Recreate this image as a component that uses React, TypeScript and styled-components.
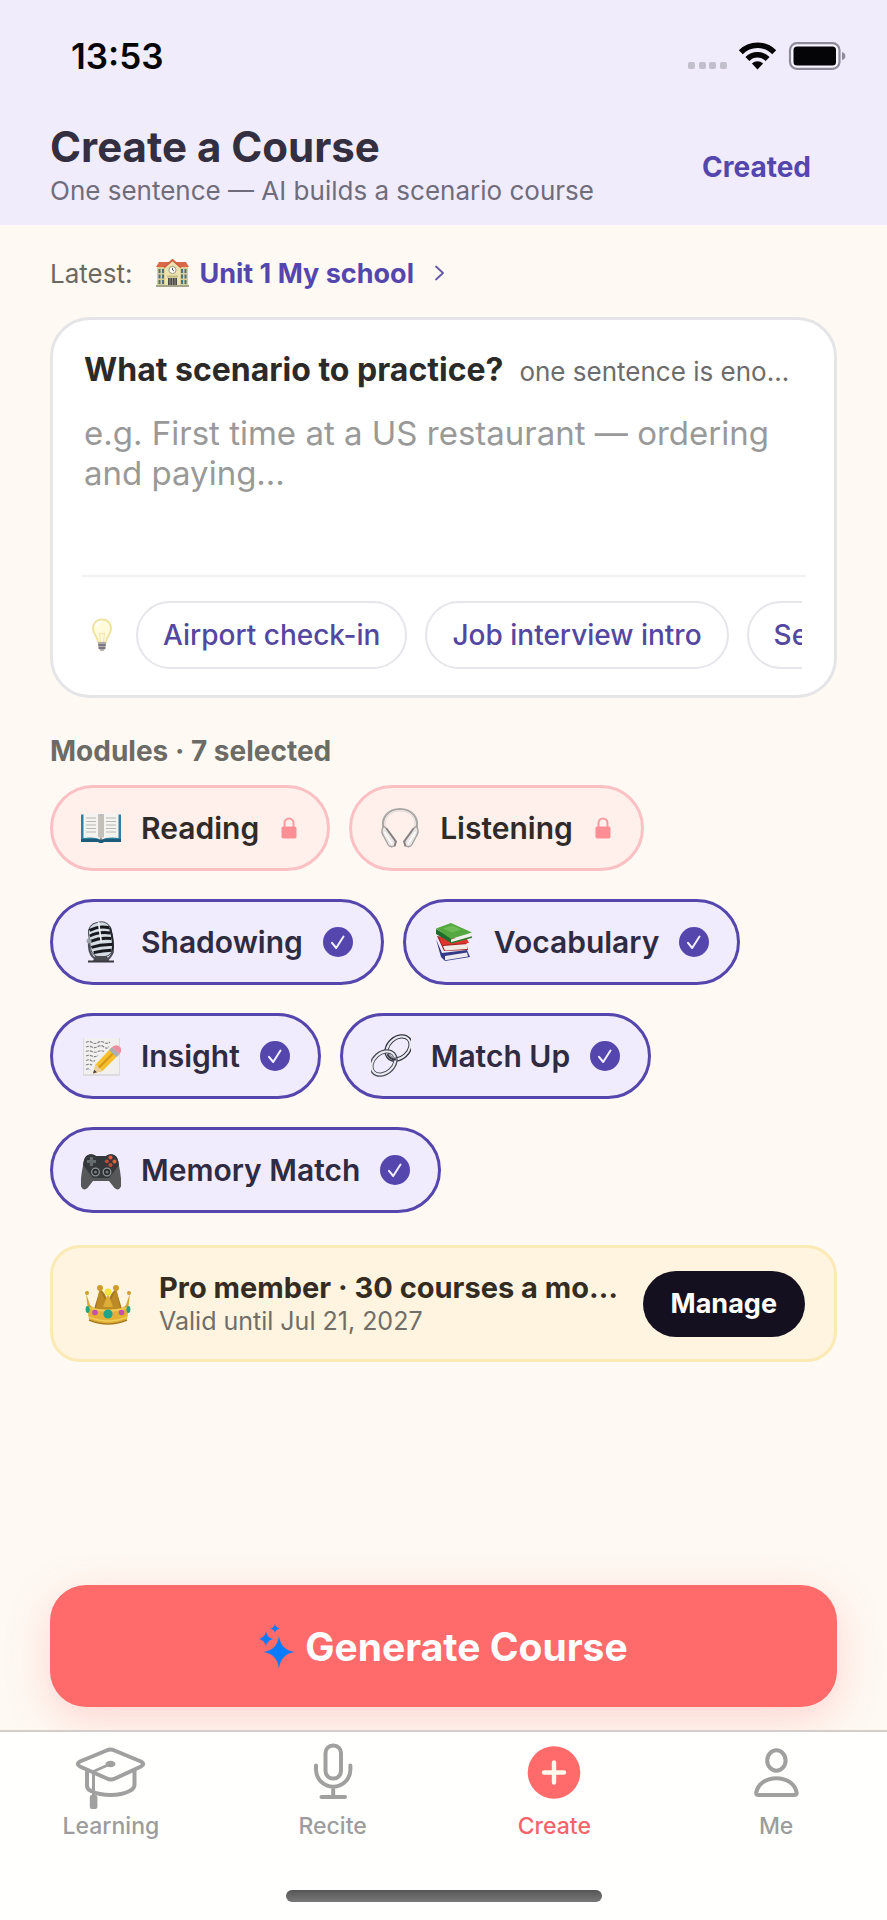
import React, { useState } from "react";
import styled, { createGlobalStyle, css } from "styled-components";

const GlobalStyle = createGlobalStyle`
  * { box-sizing: border-box; }
  body {
    margin: 0;
    background: #fef9f3;
    color: #2b2a29;
    font-family: Inter, "Liberation Sans", sans-serif;
  }
  button, input, textarea { font: inherit; color: inherit; }
  button { border: 0; background: none; padding: 0; cursor: pointer; }
  svg { display: block; flex: none; }
`;

const purple = "#5546ae";

const Page = styled.div`
  min-height: 100vh;
  display: flex;
  flex-direction: column;
`;

/* ---------- header ---------- */

const Top = styled.header`
  background: #f0ecfb;
`;

const StatusBar = styled.div`
  height: 112px;
  padding: 0 40px 0 71px;
  display: flex;
  align-items: center;
  justify-content: space-between;
  color: #050507;
  font-size: 35px;
  font-weight: 600;
`;

const TitleRow = styled.div`
  padding: 0 50px;
  display: flex;
  align-items: center;
  justify-content: space-between;
`;

const TitleBlock = styled.div`
  padding: 8px 0 17px;
`;

const Title = styled.h1`
  margin: 0;
  font-size: 42px;
  line-height: 54px;
  font-weight: 700;
  color: #332f40;
`;

const Subtitle = styled.p`
  margin: 0;
  font-size: 26px;
  line-height: 34px;
  color: #6f6c7c;
`;

const CreatedButton = styled.button`
  padding: 12px 26px 16px;
  font-size: 28px;
  line-height: 34px;
  font-weight: 700;
  color: ${purple};
`;

/* ---------- content ---------- */

const Main = styled.main`
  flex: 1;
  padding: 30px 50px 40px;
`;

const LatestRow = styled.div`
  display: flex;
  align-items: center;
  gap: 24px;
  height: 36px;
  font-size: 26px;
  color: #6b6862;
`;

const LatestLink = styled.a`
  display: flex;
  align-items: center;
  gap: 10px;
  font-size: 27px;
  font-weight: 700;
  color: ${purple};
  text-decoration: none;
  svg:last-child { margin-left: 10px; }
`;

const PromptCard = styled.section`
  margin-top: 26px;
  padding: 30px 28px 26px;
  border: 3px solid #e5e5e8;
  border-radius: 40px;
  background: #ffffff;
`;

const PromptHead = styled.div`
  display: flex;
  align-items: baseline;
  gap: 16px;
  padding: 0 4px 0 3px;
  line-height: 40px;
`;

const PromptLabel = styled.label`
  flex: none;
  font-size: 32px;
  font-weight: 700;
`;

const ellipsis = css`
  overflow: hidden;
  white-space: nowrap;
  text-overflow: ellipsis;
`;

const PromptHint = styled.span`
  flex: 1;
  min-width: 0;
  font-size: 26px;
  color: #6c6c6c;
  ${ellipsis}
`;

const PromptInput = styled.textarea`
  display: block;
  width: 100%;
  height: 162px;
  margin-top: 21px;
  padding: 0 3px;
  border: 0;
  outline: 0;
  resize: none;
  background: transparent;
  font-size: 33px;
  line-height: 40px;
  &::placeholder { color: #999999; opacity: 1; }
`;

const Ideas = styled.div`
  display: flex;
  align-items: center;
  gap: 16px;
  padding: 24px 4px 0 3px;
  border-top: 2px solid #f1f1f2;
`;

const IdeaScroller = styled.div`
  flex: 1;
  display: flex;
  gap: 18px;
  overflow: hidden;
`;

const IdeaChip = styled.button`
  flex: none;
  height: 68px;
  padding: 0 25px;
  border: 2px solid #e6e5ea;
  border-radius: 34px;
  font-size: 28px;
  font-weight: 500;
  color: #54479f;
`;

const SectionTitle = styled.h2`
  margin: 36px 0 17px;
  font-size: 28px;
  line-height: 34px;
  font-weight: 700;
  color: #6d6b65;
`;

const ModuleList = styled.div`
  display: flex;
  flex-wrap: wrap;
  gap: 28px 19px;
`;

const ModuleChip = styled.label<{ $locked: boolean }>`
  display: flex;
  align-items: center;
  height: 86px;
  padding: 0 28px;
  border: 3px solid ${(p) => (p.$locked ? "#fbc0c4" : purple)};
  border-radius: 43px;
  background: ${(p) => (p.$locked ? "#fff0ec" : "#f0ecfd")};
  font-size: 30px;
  font-weight: 600;
  color: ${(p) => (p.$locked ? "#302a28" : "#2f2b42")};
  cursor: pointer;
`;

const ModuleName = styled.span`
  margin: 0 20px;
`;

const Mark = styled.span<{ $locked: boolean }>`
  display: grid;
  place-items: center;
  width: ${(p) => (p.$locked ? 20 : 30)}px;
  height: 30px;
  > * { grid-area: 1 / 1; }
  svg { pointer-events: none; }
`;

const MarkBox = styled.input`
  appearance: none;
  width: 100%;
  height: 30px;
  margin: 0;
  border-radius: 15px;
  border: 0;
  &:enabled { background: #d8d2f0; }
  &:enabled:checked { background: ${purple}; }
`;

const ProCard = styled.section`
  display: flex;
  align-items: center;
  margin-top: 32px;
  height: 117px;
  padding: 0 29px 0 32px;
  border: 3px solid #faeab6;
  border-radius: 30px;
  background: #fff4df;
`;

const ProText = styled.div`
  flex: 1;
  min-width: 0;
  margin: 0 18px 0 28px;
`;

const ProTitle = styled.div`
  font-size: 29px;
  line-height: 36px;
  font-weight: 700;
  color: #342c22;
  ${ellipsis}
`;

const ProDate = styled.div`
  font-size: 25px;
  line-height: 31px;
  color: #706e68;
`;

const ManageButton = styled.button`
  height: 66px;
  padding: 0 28px;
  border-radius: 33px;
  background: #14101f;
  font-size: 27px;
  font-weight: 700;
  color: #ffffff;
`;

/* ---------- bottom ---------- */

const Action = styled.div`
  padding: 60px 50px 23px;
  margin-top: -60px;
  overflow: hidden;
`;

const GenerateButton = styled.button`
  display: flex;
  align-items: center;
  justify-content: center;
  gap: 10px;
  width: 100%;
  height: 122px;
  border-radius: 36px;
  background: #ff6b6b;
  box-shadow: 0 12px 44px rgba(255, 107, 107, 0.25);
  font-size: 39px;
  font-weight: 700;
  color: #ffffff;
`;

const TabBar = styled.nav`
  display: grid;
  grid-template-columns: repeat(4, 1fr);
  padding-top: 7px;
  border-top: 2px solid #d5cdca;
  background: #fffffe;
`;

const Tab = styled.a<{ $active?: boolean }>`
  display: flex;
  flex-direction: column;
  align-items: center;
  font-size: 23px;
  line-height: 28px;
  font-weight: 500;
  text-decoration: none;
  color: ${(p) => (p.$active ? "#f4636c" : "#9c9c9c")};
`;

const HomeArea = styled.div`
  display: flex;
  justify-content: center;
  padding: 50px 0 18px;
  background: #fffffe;
`;

const HomeBar = styled.div`
  width: 316px;
  height: 12px;
  border-radius: 6px;
  background: linear-gradient(#565656, #787878);
`;

/* ---------- icons ---------- */

const StatusIcons = () => (
  <svg width="160" height="30" viewBox="0 0 160 30" aria-hidden="true">
    <g fill="#c2bfcc">
      {[1, 12, 22, 33].map((x) => (
        <rect key={x} x={x} y="21" width="7" height="7" rx="2" />
      ))}
    </g>
    <g fill="none" stroke="#050507" strokeWidth="5.6">
      <path d="M53.8 11.2a23.5 23.5 0 0 1 33.4 0" />
      <path d="M60.4 18a14.2 14.2 0 0 1 20.2 0" />
    </g>
    <path d="M70.5 28.4l-5.600-5.800a8 8 0 0 1 11.200 0z" fill="#050507" />
    <rect x="103" y="2.2" width="49.5" height="25.6" rx="7" fill="#f8f5ff" stroke="#8f8c9a" strokeWidth="2.2" />
    <rect x="106.5" y="5.6" width="42.5" height="18.8" rx="3.5" fill="#050507" />
    <path d="M155 11q3.4 1 3.4 4t-3.4 4z" fill="#8f8c9a" />
  </svg>
);

const School = () => (
  <svg width="33" height="28" viewBox="0 0 33 28" aria-hidden="true">
    <path d="M1 8h31v19H1z" fill="#d9cf98" />
    <path d="M0 8L3 3h27l3 5z" fill="#d9694a" />
    <path d="M9 8l7.500-7L24 8v19H9z" fill="#eee3ae" />
    <path d="M8 8.500L16.500 1 25 8.500" fill="none" stroke="#cf6042" strokeWidth="2" />
    <circle cx="16.500" cy="11" r="3.600" fill="#fff" stroke="#9c9878" />
    <path d="M16.500 11V8.800M16.500 11l1.600 1" stroke="#444" strokeWidth=".9" />
    <g fill="#4e7276">
      <path d="M2.500 10h2v4h-2zM6 10h2v4H6zM2.500 15.500h2v4h-2zM6 15.500h2v4H6zM2.500 21h2v4h-2zM6 21h2v4H6zM25 10h2v4h-2zM28.500 10h2v4h-2zM25 15.500h2v4h-2zM28.500 15.500h2v4h-2zM25 21h2v4h-2zM28.500 21h2v4h-2z" />
    </g>
    <path d="M12 19h9v8h-9z" fill="#49494c" />
    <path d="M16.500 19v8M14 19v8M19 19v8" stroke="#a7a28a" strokeWidth=".8" />
    <path d="M11 16.500h11v2H11z" fill="#c3b983" />
    <path d="M0 26h33v2H0z" fill="#a3a48d" />
  </svg>
);

const Bulb = () => (
  <svg width="36" height="36" viewBox="0 0 36 36" aria-hidden="true">
    <path d="M18 2.500c-5.800 0-9 4-9 9 0 6 4.500 8 5.200 14h7.600c.7-6 5.200-8 5.200-14 0-5-3.200-9-9-9z" fill="#fffbdc" stroke="#eee3a2" strokeWidth="2" />
    <path d="M12 9c.5-2.600 2.600-4 5-4" fill="none" stroke="#fff" strokeWidth="2" strokeLinecap="round" />
    <path d="M16.500 25l-1-9 2.500 1 2.500-1-1 9" fill="none" stroke="#f3e3a6" strokeWidth="1" />
    <path d="M14 25h8l-.6 6.500-2 2.500h-2.800l-2-2.500z" fill="#b3aea8" />
    <path d="M14.300 28h7.400M14.600 31h6.800" stroke="#6b6578" strokeWidth="1.400" />
  </svg>
);

const Chevron = () => (
  <svg width="12" height="18" viewBox="0 0 12 18" fill="none" aria-hidden="true">
    <path d="M2 2.500L9 9l-7 6.500" stroke="#6558a8" strokeWidth="1.800" strokeLinecap="round" strokeLinejoin="round" />
  </svg>
);

const Art = ({ children }: { children: React.ReactNode }) => (
  <svg width="40" height="44" viewBox="0 0 40 44" aria-hidden="true">{children}</svg>
);

const OpenBook = () => (
  <Art>
    <path d="M0 8.500h40V36H23q-3 2-6 0H0z" fill="#2f7f9e" />
    <path d="M0 33h40v3H23q-3 2-6 0H0z" fill="#1d5c79" />
    <path d="M2.500 7.500Q14 5.500 20 9q6-3.500 17.500-1.500V32Q26 30.500 20 34q-6-3.500-17.500-2z" fill="#f4f3ef" />
    <path d="M20 9v25" stroke="#6d6b68" strokeWidth="1.600" />
    <path d="M17 8q2 .3 3 1.500v23q-1-1-3-1.500zM23 8q-2 .3-3 1.500v23q1-1 3-1.500z" fill="#c3c0ba" />
    <path d="M5 12h10M5 15.500h10M5 19h10M5 22.500h10M5 26h10M25 12h10M25 15.500h10M25 19h10M25 22.500h10M25 26h10" stroke="#b9b8b5" strokeWidth="1" />
  </Art>
);

const HeadphoneCup = () => (
  <>
    <path d="M2 24q1-5 4-2l9 13q1.500 4-2 5.500-3 1-5-2L3 29q-1.500-2-1-5z" fill="#e9e5e3" stroke="#a19d9b" strokeWidth="1.300" />
    <path d="M6.500 22.500L16 35.500l-1.500 5" fill="none" stroke="#86817f" strokeWidth="1.800" />
    <path d="M4.500 26l7.500 12" stroke="#fff" strokeWidth="1.500" />
  </>
);

const Headphones = () => (
  <Art>
    <path d="M4 24C0 11 9 3 20 3s20 8 16 21" fill="none" stroke="#aba7a5" strokeWidth="2.200" />
    <path d="M5.500 22C3 11 11 5 20 5s17 6 14.500 17" fill="none" stroke="#dedad8" strokeWidth="1" />
    <HeadphoneCup />
    <g transform="matrix(-1 0 0 1 40 0)">
      <HeadphoneCup />
    </g>
  </Art>
);

const StudioMic = () => (
  <Art>
    <g transform="rotate(-8 20 20)">
      <rect x="8.500" y="2" width="23" height="35" rx="10" fill="#d5dbe2" stroke="#4c5058" strokeWidth="1" />
      <path d="M10 9q10-4 20 0M9.500 14.500q10-3.500 21 0M9.500 20q10-3 21 0M9.500 26q10-2 21 0M11 31.500q9-1 18 0" fill="none" stroke="#17191f" strokeWidth="3" />
      <path d="M20 2v20" stroke="#f5f7fa" strokeWidth="1.600" />
      <path d="M30.500 9q2.500 14-1 25" fill="none" stroke="#22242b" strokeWidth="2" />
    </g>
    <path d="M8 20q-1 12 4 17l4 3h10q5-4 6-9" fill="none" stroke="#4b4e57" strokeWidth="2" />
    <circle cx="8" cy="21" r="2.500" fill="#9ba0a9" />
    <path d="M14 36h12l2 5H12z" fill="#4a4c52" />
    <path d="M7 40.500h26v2H7z" fill="#3a3b40" />
  </Art>
);

const Books = () => (
  <Art>
    <path d="M2 19l5 18 4 4 25-4-3-7-25 3z" fill="#343a86" />
    <path d="M11 36l22-3.500 1 4-23 3.800z" fill="#eceaf0" />
    <path d="M3 16l7 15 24-1-2-9z" fill="#a02222" />
    <path d="M5 17l28 2 2 4-27 2z" fill="#e0352c" />
    <path d="M9 26l25-2-1 5-22 1.500z" fill="#f3e9e4" />
    <path d="M2 9v5l15 9 1-5z" fill="#1f6d2a" />
    <path d="M2 8.500L17 3l21 9.500L17 19z" fill="#55a83f" />
    <path d="M17 19.500l21-6.500-1 4-20 6z" fill="#f0efe9" />
    <path d="M17 23l21-6" stroke="#2c7d31" strokeWidth="1.400" />
    <path d="M9 8.500L18 5.500l9 4-9 3z" fill="#6cbb54" />
  </Art>
);

const Memo = () => (
  <Art>
    <rect x="2" y="4" width="37" height="38" fill="#dcdbde" />
    <rect x="3" y="4" width="35" height="36" fill="#f1f0ef" />
    <path d="M5 8.500q3-2 6 0t6 0 6 0 6-.5M5 13q3-1.500 6 0t6-.5 6 .5 5-.5M5 17.500q3-1.500 6 0t6 0 6 0M5 22q3-1.500 6 0t6-.5M5 26.500q3-1.500 5 0t4 0M5 31q3-1.500 6 0M5 35.500q2-1.500 4 0" fill="none" stroke="#85848a" strokeWidth="1.200" strokeDasharray="3 1" />
    <path d="M12 39.500l2.500-9L30 14l7.500 7L21.500 37z" fill="#f6c02d" />
    <path d="M17.500 34L34 17.500" stroke="#d99516" strokeWidth="2.200" />
    <path d="M12 39.500l2.500-9 7 6.500z" fill="#ecd1a0" />
    <path d="M12 39.500l1.200-3.800 2.700 2.600z" fill="#4a443f" />
    <path d="M28 16l3-3 7.500 7-3 3.200z" fill="#a9b0b4" />
    <path d="M30.800 13.200q4.400-3.600 8-.4t-.5 7.200z" fill="#ee8fa0" />
  </Art>
);

const LinkRing = ({ x, y, dark }: { x: number; y: number; dark: string }) => (
  <g transform={`rotate(-42 ${x} ${y})`}>
    <ellipse cx={x} cy={y} rx="13.500" ry="10" stroke={dark} strokeWidth="4.200" />
    <ellipse cx={x} cy={y} rx="13.300" ry="9.800" stroke="#ececf4" strokeWidth="2" />
  </g>
);

const LinkArt = () => (
  <Art>
    <g fill="none">
      <LinkRing x={27.5} y={14} dark="#32343e" />
      <LinkRing x={12.5} y={29} dark="#4c4e58" />
      <path d="M17 20q2 5 8 5" stroke="#3b3d47" strokeWidth="3.200" />
      <path d="M18 20q2 4 7 4" stroke="#a6a8b3" strokeWidth="1.200" />
    </g>
  </Art>
);

const Gamepad = () => (
  <Art>
    <path d="M6 7.500q5-2.500 9 .5h10q4-3 9-.5 3 1.500 4 10 3 15 2 21-2.500 5-6.500 1.500L28 33H12l-5.500 7Q2.500 43.500 0 38.500q-1-6 2-21 1-8.500 4-10z" fill="#56585a" />
    <path d="M6 7.500q5-2.500 9 .5h10q4-3 9-.5 3 1.500 4 9.500L28 30H12L2 17q1-8 4-9.500z" fill="#35383a" />
    <path d="M10.500 9v9M6 13.500h9" stroke="#666c6d" strokeWidth="3.200" />
    <g fill="#ee5a3a"><circle cx="29.500" cy="9.500" r="2" /><circle cx="33.500" cy="13.500" r="2" /></g>
    <g fill="#c94a33"><circle cx="25.800" cy="13.300" r="1.900" /><circle cx="29.500" cy="17" r="2" /></g>
    <g fill="#25282a" stroke="#8c9293" strokeWidth="1.300"><circle cx="14.500" cy="24" r="3.800" /><circle cx="26" cy="24" r="3.800" /></g>
    <g fill="#767c7d"><circle cx="14.500" cy="24" r="1.600" /><circle cx="26" cy="24" r="1.600" /></g>
  </Art>
);

const Crown = () => (
  <svg width="46" height="42" viewBox="0 0 46 42" aria-hidden="true">
    <path d="M9 24l6-18 16 0 6 18z" fill="#fff4df" />
    <path d="M9 26l6-20q5 3 8 13 3-10 8-13l6 20z" fill="#a8781f" />
    <path d="M1 10l3 26q19 9 38 0l3-26-4 12-6 5-12-3-12 3-6-5z" fill="#d9a52c" />
    <path d="M14.500 6l7.500 15 1 5-12 0zM31.500 6L24 21l-1 5 12 0z" fill="#bd8b26" />
    <path d="M23 10l5 14H18z" fill="#dcae37" />
    <path d="M2.500 23q20 7 41 0L42 36q-19 8-38 0z" fill="#e2b136" />
    <path d="M3 24.500q20 7 40 0M4 34q19 8 38 0" fill="none" stroke="#f0cb58" strokeWidth="1.400" />
    <path d="M4 37q19 8 38 0" fill="none" stroke="#a9791c" strokeWidth="1.600" />
    <g fill="#cf9c2c"><circle cx="15" cy="5" r="3" /><circle cx="31" cy="5" r="3" /><circle cx="2" cy="10" r="2" /><circle cx="44" cy="10" r="2" /></g>
    <circle cx="23" cy="9" r="3.600" fill="#f4e23d" />
    <circle cx="23" cy="31" r="4.600" fill="#1fa487" />
    <circle cx="10" cy="29.500" r="2.800" fill="#c64fae" />
    <circle cx="36.500" cy="29.500" r="2.800" fill="#c64fae" />
    <ellipse cx="2.600" cy="26.500" rx="2" ry="3.400" fill="#25a37f" />
    <ellipse cx="43.400" cy="26.500" rx="2" ry="3.400" fill="#25a37f" />
  </svg>
);

const Lock = () => (
  <svg width="18" height="24" viewBox="0 0 18 24" aria-hidden="true">
    <path d="M4.500 11V7a4.500 4.500 0 0 1 9 0v4" fill="none" stroke="#fd99a0" strokeWidth="2" />
    <rect x="1.500" y="10.500" width="15" height="12" rx="1.800" fill="#fd8e95" />
  </svg>
);

const Check = () => (
  <svg width="30" height="30" viewBox="0 0 30 30" aria-hidden="true">
    <path d="M9 15.800l4.200 5.200L20.500 9.500" fill="none" stroke="#f4f0ff" strokeWidth="2" strokeLinecap="round" strokeLinejoin="round" />
  </svg>
);

const Sparkles = () => (
  <svg width="36" height="50" viewBox="0 0 36 50" fill="#087bff" aria-hidden="true">
    <path d="M20 15q1.800 14 15.500 16Q21.800 33 20 47.500 18.200 33 4.500 31 18.200 29 20 15z" />
    <path d="M7 10.500q1.200 6.500 7.500 7.500Q8.200 19 7 25.500 5.800 19-.5 18 5.800 17 7 10.500z" />
    <path d="M16 3q.9 3.800 4.700 4.500-3.800.7-4.700 4.500-.9-3.800-4.700-4.500Q15.100 6.800 16 3z" />
  </svg>
);

const TabIcon = ({ children }: { children: React.ReactNode }) => (
  <svg width="90" height="73" viewBox="0 0 90 73" fill="none" stroke="#a0a0a0" strokeWidth="4" strokeLinecap="round" strokeLinejoin="round" aria-hidden="true">
    {children}
  </svg>
);

const LearningIcon = () => (
  <TabIcon>
    <path d="M40.500 11.500q4-2 8 0l26.500 11q4.500 2.500 0 5L49 39.500q-4 2-8 0L14 27.500q-4.500-2.500 0-5z" />
    <path d="M21 33v14q0 3 4 5 8 4 19.500 4t19-4q5-2.500 5-6V32" />
    <path d="M43 25.500l-15.500 7V57" strokeWidth="3" />
    <ellipse cx="44.500" cy="25" rx="5" ry="3.200" fill="#a0a0a0" stroke="none" />
    <rect x="23.800" y="56" width="7.600" height="14" rx="2" fill="#a0a0a0" stroke="none" />
  </TabIcon>
);

const ReciteIcon = () => (
  <TabIcon>
    <rect x="37.500" y="6.500" width="15.500" height="33" rx="7.500" />
    <path d="M28 26.500v4a17.200 17.200 0 0 0 34.400 0v-4M45.200 48v9M33.500 58h23.500" />
  </TabIcon>
);

const CreateIcon = () => (
  <TabIcon>
    <circle cx="45" cy="33.500" r="26.300" fill="#ff6b6b" stroke="none" />
    <path d="M45 23.500v20M35 33.500h20" stroke="#fff9ec" strokeWidth="4.400" />
  </TabIcon>
);

const MeIcon = () => (
  <TabIcon>
    <ellipse cx="45.400" cy="21.500" rx="9.200" ry="10.200" />
    <path d="M27 56h36.800q2 0 1.800-2.500C64 45 56 39.200 45.400 39.200S27 45 25.200 53.500Q25 56 27 56z" />
  </TabIcon>
);

/* ---------- screen ---------- */

const ideas = ["Airport check-in", "Job interview intro", "Seeing a doctor"];

const modules = [
  { name: "Reading", icon: <OpenBook />, locked: true },
  { name: "Listening", icon: <Headphones />, locked: true },
  { name: "Shadowing", icon: <StudioMic />, locked: false },
  { name: "Vocabulary", icon: <Books />, locked: false },
  { name: "Insight", icon: <Memo />, locked: false },
  { name: "Match Up", icon: <LinkArt />, locked: false },
  { name: "Memory Match", icon: <Gamepad />, locked: false },
];

export default function App() {
  const [selected, setSelected] = useState<string[]>(modules.map((m) => m.name));
  const [prompt, setPrompt] = useState("");

  const toggle = (name: string) =>
    setSelected((s) => (s.includes(name) ? s.filter((n) => n !== name) : [...s, name]));

  return (
    <Page>
      <GlobalStyle />
      <Top>
        <StatusBar>
          <span>13:53</span>
          <StatusIcons />
        </StatusBar>
        <TitleRow>
          <TitleBlock>
            <Title>Create a Course</Title>
            <Subtitle>One sentence — AI builds a scenario course</Subtitle>
          </TitleBlock>
          <CreatedButton type="button">Created</CreatedButton>
        </TitleRow>
      </Top>

      <Main>
        <LatestRow>
          <span>Latest:</span>
          <LatestLink href="#latest">
            <School />
            Unit 1 My school
            <Chevron />
          </LatestLink>
        </LatestRow>

        <PromptCard>
          <PromptHead>
            <PromptLabel htmlFor="scenario">What scenario to practice?</PromptLabel>
            <PromptHint>one sentence is enough</PromptHint>
          </PromptHead>
          <PromptInput
            id="scenario"
            value={prompt}
            onChange={(e) => setPrompt(e.target.value)}
            placeholder="e.g. First time at a US restaurant — ordering and paying…"
          />
          <Ideas>
            <Bulb />
            <IdeaScroller>
              {ideas.map((idea) => (
                <IdeaChip key={idea} type="button" onClick={() => setPrompt(idea)}>
                  {idea}
                </IdeaChip>
              ))}
            </IdeaScroller>
          </Ideas>
        </PromptCard>

        <SectionTitle>Modules · {selected.length} selected</SectionTitle>
        <ModuleList>
          {modules.map(({ name, icon, locked }) => (
            <ModuleChip key={name} $locked={locked}>
              {icon}
              <ModuleName>{name}</ModuleName>
              <Mark $locked={locked}>
                <MarkBox
                  type="checkbox"
                  checked={selected.includes(name)}
                  disabled={locked}
                  onChange={() => toggle(name)}
                />
                {locked ? <Lock /> : <Check />}
              </Mark>
            </ModuleChip>
          ))}
        </ModuleList>

        <ProCard>
          <Crown />
          <ProText>
            <ProTitle>Pro member · 30 courses a month</ProTitle>
            <ProDate>Valid until Jul 21, 2027</ProDate>
          </ProText>
          <ManageButton type="button">Manage</ManageButton>
        </ProCard>
      </Main>

      <Action>
        <GenerateButton type="button">
          <Sparkles />
          Generate Course
        </GenerateButton>
      </Action>

      <TabBar>
        <Tab href="#learning"><LearningIcon />Learning</Tab>
        <Tab href="#recite"><ReciteIcon />Recite</Tab>
        <Tab href="#create" $active aria-current="page"><CreateIcon />Create</Tab>
        <Tab href="#me"><MeIcon />Me</Tab>
      </TabBar>
      <HomeArea>
        <HomeBar />
      </HomeArea>
    </Page>
  );
}
